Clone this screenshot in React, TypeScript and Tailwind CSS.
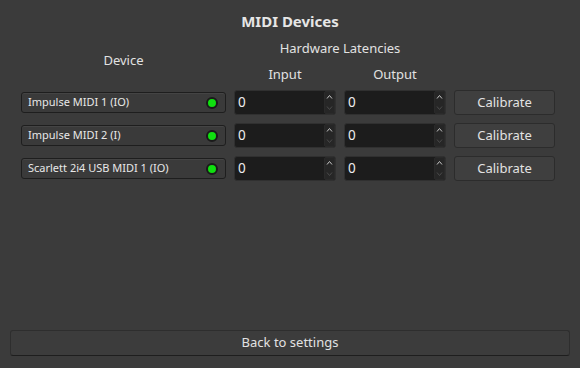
const DEVICES = [
  "Impulse MIDI 1 (IO)",
  "Impulse MIDI 2 (I)",
  "Scarlett 2i4 USB MIDI 1 (IO)",
];

function SpinBox() {
  return (
    <div className="flex h-[25px] rounded-[3px] border border-[#303030] bg-[#1c1c1c]">
      <span className="flex-1 pl-[3px] text-[13.5px] leading-[23px] text-[#eeeeee]">0</span>
      <div className="flex w-[11px] flex-col items-center justify-between rounded-[2px] border border-[#2a2a2a] bg-[#262626]">
        <svg width="7" height="9" viewBox="0 0 7 9" className="mt-[1px]">
          <path d="M1 5.5 L3.5 2.5 L6 5.5" fill="none" stroke="#c4c4c4" strokeWidth="1" />
        </svg>
        <svg width="7" height="9" viewBox="0 0 7 9" className="mb-[1px]">
          <path d="M1 3.5 L3.5 6.5 L6 3.5" fill="none" stroke="#4a4a4a" strokeWidth="1" />
        </svg>
      </div>
    </div>
  );
}

export default function App() {
  return (
    <div
      className="flex h-[368px] w-[580px] flex-col bg-[#3b3b3b] text-[#e2e2e2]"
      style={{ fontFamily: '"Noto Sans", "DejaVu Sans", sans-serif' }}
    >
      <h1 className="pt-[11px] text-center text-[15px] font-bold leading-[20px] text-[#e6e6e6]">
        MIDI Devices
      </h1>

      <div className="ml-[21px] mt-[4px] grid grid-cols-[205px_102px_102px_101px] gap-x-2">
        {/* header */}
        <div className="row-span-2 flex items-center justify-center text-[13px]">Device</div>
        <div className="col-span-2 h-[26px] text-center text-[13px] leading-[26px]">Hardware Latencies</div>
        <div className="row-span-2" />
        <div className="h-[26px] text-center text-[13px] leading-[26px]">Input</div>
        <div className="h-[26px] text-center text-[13px] leading-[26px]">Output</div>

        {/* devices */}
        {DEVICES.map((name, i) => (
          <div key={name} className={`col-span-4 grid grid-cols-subgrid ${i === 0 ? "mt-[3px]" : "mt-2"}`}>
            <div className="my-[2px] flex h-[21px] items-center justify-between rounded-[3px] border border-[#1e1e1e] bg-[#3a3a3a] pl-[6px] pr-[7px] shadow-[inset_0_1px_0_#444]">
              <span className="text-[11px] text-[#e8e8e8]">{name}</span>
              <span className="h-[12px] w-[12px] rounded-full border-2 border-[#1a1a1a] bg-[#10e010]" />
            </div>
            <SpinBox />
            <SpinBox />
            <button className="h-[25px] rounded-[3px] border border-[#2c2c2c] bg-[#3f3f3f] text-[13px] text-[#e2e2e2]">
              Calibrate
            </button>
          </div>
        ))}
      </div>

      <div className="flex-1" />
      <button className="mx-[10px] mb-[12px] h-[26px] rounded-[3px] border border-[#2e2e2e] border-b-[#1e1e1e] bg-[#3c3c3c] text-[13px] text-[#e2e2e2]">
        Back to settings
      </button>
    </div>
  );
}
